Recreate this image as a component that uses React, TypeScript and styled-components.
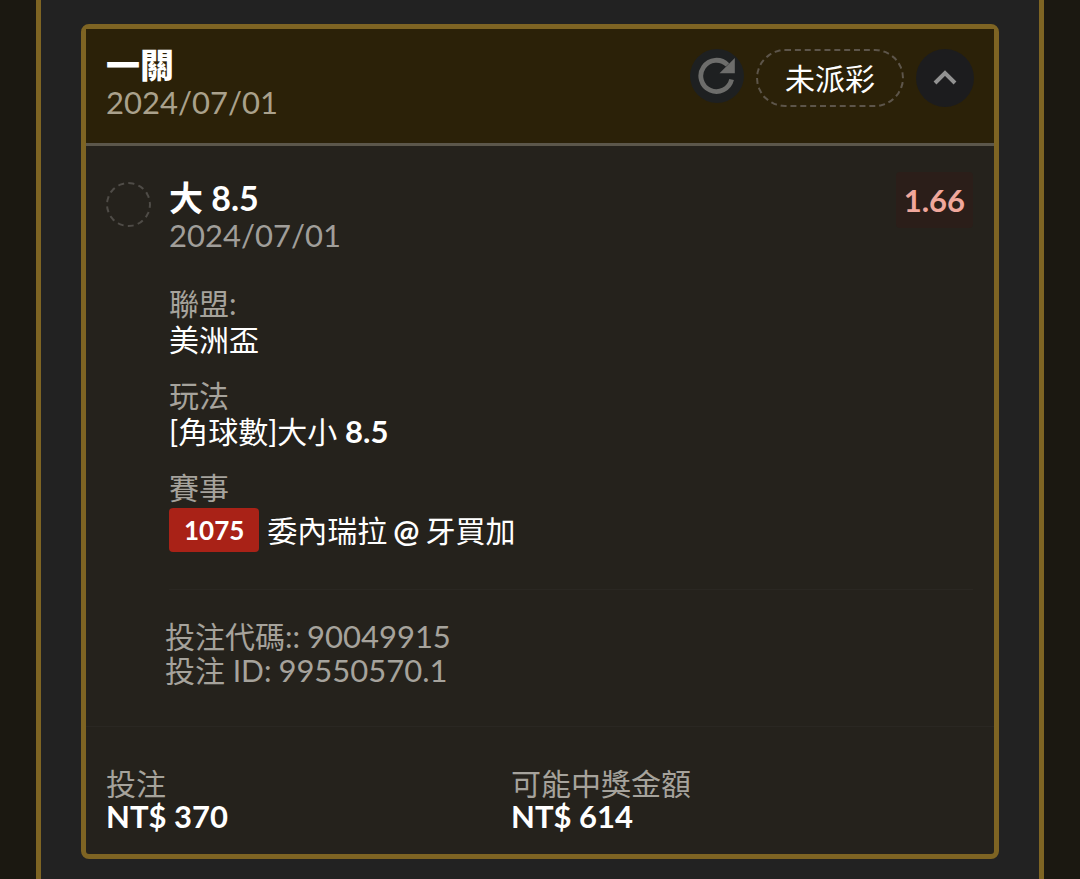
import React, { useState } from "react";
import styled, { createGlobalStyle } from "styled-components";

const GlobalStyle = createGlobalStyle`
  *, *::before, *::after { box-sizing: border-box; }
  body {
    margin: 0;
    background: #1b1811;
    color: #ffffff;
    font-family: Lato, "Noto Sans CJK TC", sans-serif;
    font-size: 30px;
    line-height: 36px;
  }
  h2, h3, p, dl, dt, dd { margin: 0; }
`;

const gold = "#7e6423";
const muted = "#a6a39c";

const Panel = styled.main`
  min-height: 100vh;
  margin: 0 36px;
  padding: 24px 40px 21px;
  background: #222222;
  border: solid ${gold};
  border-width: 0 5px;
`;

const Card = styled.article`
  background: #25221c;
  border: 5px solid ${gold};
  border-radius: 8px;
`;

const Header = styled.header`
  display: flex;
  justify-content: space-between;
  align-items: flex-start;
  padding: 18px 20px 22px;
  background: #2b2108;
  border-bottom: 3px solid #5c574b;
`;

const Heading = styled.h2`
  font-size: 34px;
  font-weight: 900;
  line-height: 36px;
`;

const DateText = styled.p<{ $warm?: boolean }>`
  font-size: 31px;
  line-height: 38px;
  color: ${(p) => (p.$warm ? "#aaa18c" : "#a09e9a")};
`;

const Controls = styled.div`
  display: flex;
  align-items: flex-start;
  gap: 12px;
  padding-top: 2px;
`;

const RoundButton = styled.button<{ $size: number; $fill: string }>`
  display: flex;
  align-items: center;
  justify-content: center;
  width: ${(p) => p.$size}px;
  height: ${(p) => p.$size}px;
  padding: 0;
  border: 0;
  border-radius: 50%;
  background: ${(p) => p.$fill};
`;

const Status = styled.span`
  height: 58px;
  padding: 0 27px;
  border: 2px dashed #5d554a;
  border-radius: 29px;
  line-height: 54px;
`;

const Selection = styled.section`
  display: flex;
  align-items: flex-start;
  gap: 18px;
  padding: 34px 21px 0 20px;
`;

const Marker = styled.span`
  flex: none;
  width: 45px;
  height: 45px;
  margin-top: 2px;
  border: 2px dashed #4f4c47;
  border-radius: 50%;
`;

const Details = styled.div`
  flex: 1;
  min-width: 0;
  padding-bottom: 37px;
  border-bottom: 1px solid #2a2722;
`;

const SelectionTop = styled.div`
  display: flex;
  justify-content: space-between;
  align-items: flex-start;
`;

const Pick = styled.h3`
  font-size: 34px;
  font-weight: 700;
  line-height: 36px;
`;

const Odds = styled.strong`
  height: 56px;
  margin-top: -8px;
  padding: 0 8px;
  border-radius: 4px;
  background: #2b1e19;
  color: #f0a79c;
  font-size: 31px;
  line-height: 56px;
`;

const Facts = styled.dl`
  display: grid;
  gap: 20px;
  padding-top: 31px;
`;

const Label = styled.dt`
  color: ${muted};
  font-weight: 400;
`;

const Value = styled.dd`
  b { font-size: 31px; }
`;

const Match = styled.dd`
  display: flex;
  align-items: center;
  gap: 8px;
  padding-top: 3px;
`;

const MatchNumber = styled.b`
  padding: 0 15px;
  border-radius: 4px;
  background: #a92217;
  font-size: 26px;
  line-height: 44px;
`;

const Teams = styled.span`
  display: flex;
  gap: 6px;
`;

const Versus = styled.b`
  font-size: 31px;
`;

const Codes = styled.dl`
  padding: 29px 20px 39px 79px;
  color: ${muted};
  line-height: 34px;
`;

const CodeRow = styled.div`
  display: flex;
  gap: 7px;
  dd { font-size: 31px; }
`;

const Totals = styled.dl`
  display: grid;
  grid-template-columns: 7fr 8fr;
  padding: 40px 20px 21px;
  border-top: 1px solid #2a2722;
  line-height: 33px;
`;

const Amount = styled.dd`
  font-size: 31px;
  font-weight: 700;
`;

const RefreshIcon = () => (
  <svg width="40" height="40" viewBox="0 0 40 40" aria-hidden="true">
    <path d="M34.600 23.500A15.600 15.600 0 1 1 30.500 8.900" fill="none" stroke="#6d6d6b" strokeWidth="4.800" />
    <path d="M37.800 2v15.300H22.500z" fill="#6d6d6b" />
  </svg>
);

const ChevronIcon = ({ flipped }: { flipped: boolean }) => (
  <svg width="24" height="18" viewBox="0 0 24 18" aria-hidden="true">
    <path d={flipped ? "M2 4l10 10L22 4" : "M2 14L12 4l10 10"} fill="none" stroke="#929292" strokeWidth="4" />
  </svg>
);

export default function App() {
  const [open, setOpen] = useState(true);
  return (
    <>
      <GlobalStyle />
      <Panel>
        <Card>
          <Header>
            <div>
              <Heading>一關</Heading>
              <DateText $warm>2024/07/01</DateText>
            </div>
            <Controls>
              <RoundButton type="button" aria-label="重新整理" $size={54} $fill="#1e2021">
                <RefreshIcon />
              </RoundButton>
              <Status>未派彩</Status>
              <RoundButton
                type="button"
                aria-label="展開或收合"
                aria-expanded={open}
                onClick={() => setOpen(!open)}
                $size={58}
                $fill="#1c1c1e"
              >
                <ChevronIcon flipped={!open} />
              </RoundButton>
            </Controls>
          </Header>
          {open && (
            <>
              <Selection>
                <Marker />
                <Details>
                  <SelectionTop>
                    <div>
                      <Pick>大 8.5</Pick>
                      <DateText>2024/07/01</DateText>
                    </div>
                    <Odds>1.66</Odds>
                  </SelectionTop>
                  <Facts>
                    <div>
                      <Label>聯盟:</Label>
                      <Value>美洲盃</Value>
                    </div>
                    <div>
                      <Label>玩法</Label>
                      <Value>[角球數]大小 <b>8.5</b></Value>
                    </div>
                    <div>
                      <Label>賽事</Label>
                      <Match>
                        <MatchNumber>1075</MatchNumber>
                        <Teams>
                          <span>委內瑞拉</span>
                          <Versus>@</Versus>
                          <span>牙買加</span>
                        </Teams>
                      </Match>
                    </div>
                  </Facts>
                </Details>
              </Selection>
              <Codes>
                <CodeRow>
                  <dt>投注代碼::</dt>
                  <dd>90049915</dd>
                </CodeRow>
                <CodeRow>
                  <dt>投注 ID:</dt>
                  <dd>99550570.1</dd>
                </CodeRow>
              </Codes>
            </>
          )}
          <Totals>
            <div>
              <Label>投注</Label>
              <Amount>NT$ 370</Amount>
            </div>
            <div>
              <Label>可能中獎金額</Label>
              <Amount>NT$ 614</Amount>
            </div>
          </Totals>
        </Card>
      </Panel>
    </>
  );
}
